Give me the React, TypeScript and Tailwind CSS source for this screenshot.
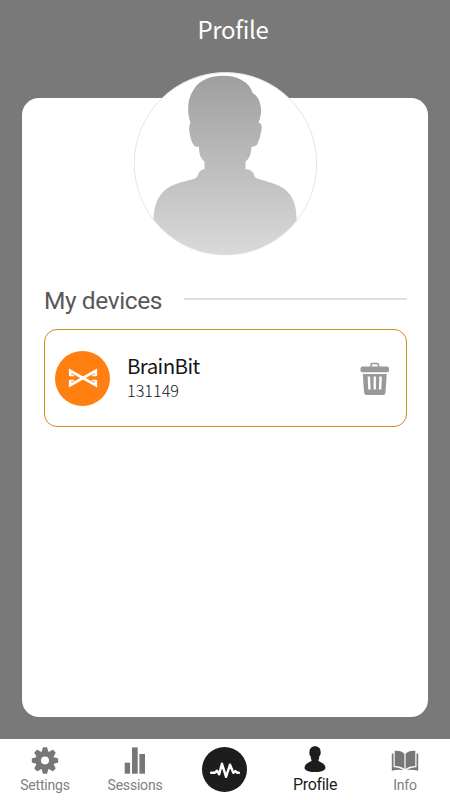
const Avatar = () => {
  return (
    <svg className="size-[184px]" viewBox="0.5 0.3 184 184">
      <defs>
        <linearGradient id="silhouette" x1="0" y1="0" x2="0" y2="1">
          <stop offset="0" stopColor="#9f9f9f" />
          <stop offset="1" stopColor="#dadada" />
        </linearGradient>
        <clipPath id="avatar-clip">
          <circle cx="92" cy="92" r="91" />
        </clipPath>
      </defs>
      <circle cx="92" cy="92" r="91.2" fill="#fff" stroke="#e4e4e4" strokeWidth="1" />
      <path
        clipPath="url(#avatar-clip)"
        fill="url(#silhouette)"
        d="M90 4C104 4 116 10 119 21C125 25 128 32 127.500 41Q127 47 125 51Q129 52 128 58Q127 66 123.500 73Q121 75 118 75Q118 85 112 90V97.500Q119 97.500 120.500 103Q121 106 123 106.500L139 111.500C158 117 163 131 163 147V184H20V147C21 130 26 117 46 111L61 107Q64 106 64.500 103Q66 98 71 97.500V90Q65 85 65.500 75H62Q58 73 56 61Q55 54 57 51C53 40 54 27 60 18C66 8 77 4 90 4Z"
      />
    </svg>
  );
};

const TrashIcon = () => {
  return (
    <svg className="mt-px h-[34px] w-[30px]" viewBox="0 0 30 34" fill="#999">
      <path d="M11 5V3Q11 1.500 12.500 1.500H17Q18.500 1.500 18.500 3V5" fill="none" stroke="#999" strokeWidth="1.600" />
      <path d="M3 4.500H27Q29 4.500 29 6.500V8.500Q29 10.200 27.500 10.200H2Q.5 10.200 .5 8.500V6.500Q.5 4.500 2.500 4.500Z" />
      <path
        fillRule="evenodd"
        d="M2.800 12H26.700L25.500 30.500Q25.300 33 22.800 33H6.700Q4.200 33 4 30.500ZM7.700 14.500L8.200 27.500H10.600L10.100 14.500ZM13.600 14.500V27.500H15.900V14.500ZM19.400 14.500L18.900 27.500H21.300L21.800 14.500Z"
      />
    </svg>
  );
};

const BrainBitLogo = () => {
  return (
    <div className="flex size-[55px] items-center justify-center rounded-full bg-[#ff8010]">
      <svg className="h-5 w-[30px]" viewBox="0 0 30 20" fill="none" stroke="#fff" strokeWidth="2.600">
        <path d="M2.200 8V2.800L27.800 17.200V12" />
        <path d="M2.200 12V17.200L27.800 2.800V8" />
        <path d="M2 7.500H6M2 12.500H6M24 7.500H28M24 12.500H28" strokeWidth="1.300" />
      </svg>
    </div>
  );
};

const SettingsIcon = () => {
  return (
    <svg className="size-[28px]" viewBox="-14 -14.5 28 28" fill="#777">
      <circle r="6.700" fill="none" stroke="#777" strokeWidth="5.400" />
      {[0, 45, 90, 135, 180, 225, 270, 315].map((angle) => (
        <path key={angle} transform={`rotate(${angle})`} d="M-3.500 -8L-2.300 -12.500Q-2.200 -13.200 -1.500 -13.200H1.500Q2.200 -13.200 2.300 -12.500L3.500 -8Z" />
      ))}
    </svg>
  );
};

const SessionsIcon = () => {
  return (
    <svg className="size-[28px]" viewBox="0 0 28 28" fill="#777">
      <rect x="3.700" y="16.700" width="5.400" height="11" />
      <rect x="11" y="1.400" width="5.700" height="26.300" />
      <rect x="18.400" y="8" width="5.600" height="19.700" />
    </svg>
  );
};

const ProfileIcon = () => {
  return (
    <svg className="size-[28px]" viewBox="0 0.8 28 28" fill="#1d1d1d">
      <path d="M14 1C17.700 1 19.700 3.500 19.600 6.500C20 8.500 19.300 10 18.300 11.200C18.200 13 17.800 14 17.500 14.800V15.800C19 17 23.500 17.700 24.300 21.500C25.500 25.500 19 26.800 14 26.800S2.500 25.500 3.700 21.500C4.500 17.700 9 17 10.500 15.800V14.800C10.200 14 9.800 13 9.700 11.200C8.700 10 8 8.500 8.500 6.500C8.500 3.500 10.300 1 14 1Z" />
    </svg>
  );
};

const InfoIcon = () => {
  return (
    <svg className="size-[28px]" viewBox="0 0 28 28" fill="#777">
      <path d="M3.700 4.800Q10.500 4.300 13.400 8V23Q10 20 3.700 20Z" />
      <path d="M24.300 4.800Q17.500 4.300 14.600 8V23Q18 20 24.300 20Z" />
      <path d="M.8 7.500H2.500V21.300Q8 21 12.500 24Q7 23 .8 24.700Z" />
      <path d="M27.200 7.500H25.500V21.300Q20 21 15.500 24Q21 23 27.200 24.700Z" />
    </svg>
  );
};

const tabs = [
  { label: "Settings", icon: <SettingsIcon /> },
  { label: "Sessions", icon: <SessionsIcon /> },
  { label: "", icon: null },
  { label: "Profile", icon: <ProfileIcon /> },
  { label: "Info", icon: <InfoIcon /> },
];

const App = () => {
  return (
    <div className="flex h-[800px] w-[450px] flex-col bg-[#797979] font-['Roboto',sans-serif]">
      <h1 className="h-[98px] pt-[11px] pl-[16px] text-center font-['Noto_Sans_CJK_SC',sans-serif] text-[24px] leading-[36px] tracking-[-0.3px] text-white">
        Profile
      </h1>

      {/* Profile card */}
      <main className="mx-[22px] flex h-[619px] flex-col rounded-[17px] bg-white px-[22px]">
        <div className="-mt-[26px] flex justify-center pl-px">
          <Avatar />
        </div>
        <div className="mt-[30px] -mr-px flex h-[30px] items-center">
          <h2 className="w-[140px] text-[24.5px] leading-[30px] tracking-[-0.4px] text-[#585858]">My devices</h2>
          <div className="mb-[4px] h-[2px] flex-1 bg-[#dfdfdf]" />
        </div>

        {/* Device */}
        <div className="mt-[13px] -mr-px flex h-[98px] items-center rounded-[13px] border-[1.5px] border-[#d18a1c] pr-[16px] pl-[10px]">
          <BrainBitLogo />
          <div className="mb-[3px] ml-[17px] flex-1 font-['Noto_Sans_CJK_SC',sans-serif] text-[#151515]">
            <p className="text-[20.5px] leading-[28px] tracking-[-0.6px]">BrainBit</p>
            <p className="text-[16.2px] leading-[23px] font-light">131149</p>
          </div>
          <TrashIcon />
        </div>
      </main>

      {/* Bottom tabs */}
      <nav className="mt-auto grid h-[61px] grid-cols-5 bg-white">
        {tabs.map((tab) =>
          tab.icon ? (
            <div key={tab.label} className="flex flex-col items-center pt-[7px]">
              {tab.icon}
              <span
                className={
                  tab.label === "Profile"
                    ? "mt-[2px] text-[16px] leading-[18px] tracking-[-0.3px] text-[#1d1d1d]"
                    : "mt-[2px] text-[14px] leading-[18px] tracking-[-0.2px] text-[#808080]"
                }
              >
                {tab.label}
              </span>
            </div>
          ) : (
            <div key="record" className="flex justify-center pt-[7.5px] pr-px">
              <div className="size-[45.5px] rounded-full bg-[#1d1d1d]">
                <svg viewBox="0 0 45 45" fill="none" stroke="#fff" strokeWidth="2.400" strokeLinecap="round" strokeLinejoin="round">
                  <path d="M9 25.500H12.500L14.800 23.500L17 27L19.700 16.500L23.800 29.500L27.700 17.500L31 25.500L33 23.800L35 25.500H36.500" />
                </svg>
              </div>
            </div>
          )
        )}
      </nav>
    </div>
  );
};

export default App;
